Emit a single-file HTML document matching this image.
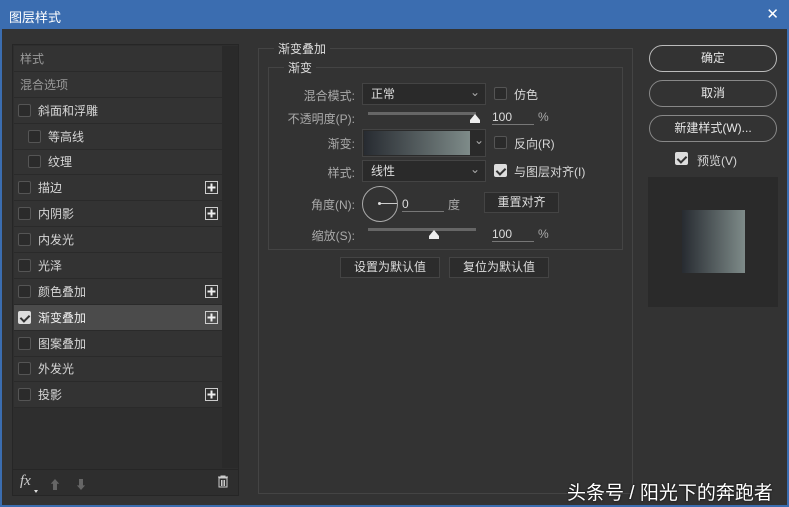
<!DOCTYPE html><html><head><meta charset="utf-8"><style>
*{box-sizing:border-box;margin:0;padding:0}
body{width:789px;height:507px;overflow:hidden;background:#3b6db0;font-family:"Liberation Sans","Noto Sans CJK SC",sans-serif;font-size:12px;color:#d6d6d6;position:relative}
.a{position:absolute}
#win{left:2px;top:29px;width:785px;height:476px;background:#333}
.title{left:9px;top:7px;color:#fff;font-size:13px}
.close{right:10px;top:5px;color:#fff;font-size:15px}
.row{position:absolute;left:14px;width:208px;height:26px;border-bottom:1px solid #2a2a2a;line-height:26px}
.cb{position:absolute;width:13px;height:13px;border:1px solid #555;border-radius:2px;background:#2b2b2b}
.cbx{background:#ddd;border-color:#ddd}
.cbx:after{content:"";position:absolute;left:3px;top:1px;width:4px;height:7px;border:solid #333;border-width:0 2px 2px 0;transform:rotate(45deg)}
.plus{position:absolute;left:191px;top:6px;width:13px;height:13px;border:1px solid #ccc}
.plus:before{content:"";position:absolute;left:2px;top:5px;width:7px;height:1px;background:#eee;box-shadow:0 0 0 .5px #eee}
.plus:after{content:"";position:absolute;left:5px;top:2px;width:1px;height:7px;background:#eee;box-shadow:0 0 0 .5px #eee}
.lbl{position:absolute;text-align:right;width:110px;color:#aaa}
.sel{position:absolute;height:22px;background:#2a2a2a;border:1px solid #444;line-height:20px;padding-left:8px;color:#ddd}
.sel:after{content:"⌄";position:absolute;right:5px;top:-2px;color:#aaa}
.btn{position:absolute;height:21px;background:#2c2c2c;border:1px solid #444;text-align:center;line-height:19px;color:#ddd}
.pill{position:absolute;left:649px;width:128px;height:27px;border:1px solid #888;border-radius:14px;text-align:center;line-height:25px;color:#e6e6e6}
.inp{position:absolute;border-bottom:1px solid #777;color:#ddd;height:16px;line-height:16px}
</style></head><body>
<div class="a title">图层样式</div><div class="a close">✕</div>
<div class="a" id="win" style="left:2px;top:29px"></div>
<div class="a" style="left:12px;top:44px;width:227px;height:452px;border:1px solid #262626;background:#2e2e2e"></div>
<div class="a" style="left:222px;top:46px;width:16px;height:422px;background:#2a2a2a"></div>
<div class="a" style="left:14px;top:46px;width:208px;height:362px;background:#333"></div>
<div class="row" style="top:46px;padding-left:6px;color:#999">样式</div>
<div class="row" style="top:72px;padding-left:6px;color:#999">混合选项</div>
<div class="row" style="top:98px"><span class="cb" style="left:4px;top:6px"></span><span style="position:absolute;left:24px">斜面和浮雕</span></div>
<div class="row" style="top:124px"><span class="cb" style="left:14px;top:6px"></span><span style="position:absolute;left:34px">等高线</span></div>
<div class="row" style="top:149px"><span class="cb" style="left:14px;top:6px"></span><span style="position:absolute;left:34px">纹理</span></div>
<div class="row" style="top:175px"><span class="cb" style="left:4px;top:6px"></span><span style="position:absolute;left:24px">描边</span><span class="plus"></span></div>
<div class="row" style="top:201px"><span class="cb" style="left:4px;top:6px"></span><span style="position:absolute;left:24px">内阴影</span><span class="plus"></span></div>
<div class="row" style="top:227px"><span class="cb" style="left:4px;top:6px"></span><span style="position:absolute;left:24px">内发光</span></div>
<div class="row" style="top:253px"><span class="cb" style="left:4px;top:6px"></span><span style="position:absolute;left:24px">光泽</span></div>
<div class="row" style="top:279px"><span class="cb" style="left:4px;top:6px"></span><span style="position:absolute;left:24px">颜色叠加</span><span class="plus"></span></div>
<div class="row" style="top:305px;background:#4b4b4b"><span class="cb cbx" style="left:4px;top:6px"></span><span style="position:absolute;left:24px;color:#eee">渐变叠加</span><span class="plus"></span></div>
<div class="row" style="top:331px"><span class="cb" style="left:4px;top:6px"></span><span style="position:absolute;left:24px">图案叠加</span></div>
<div class="row" style="top:356px"><span class="cb" style="left:4px;top:6px"></span><span style="position:absolute;left:24px">外发光</span></div>
<div class="row" style="top:382px"><span class="cb" style="left:4px;top:6px"></span><span style="position:absolute;left:24px">投影</span><span class="plus"></span></div>
<div class="a" style="left:13px;top:469px;width:225px;height:1px;background:#262626"></div>
<div class="a" style="left:20px;top:473px;font-style:italic;font-family:'Liberation Serif',serif;font-size:15px;color:#ccc">fx</div>
<div class="a" style="left:34px;top:490px;width:0;height:0;border:2px solid transparent;border-top:3px solid #ddd"></div>
<div class="a" style="left:49px;top:476px;color:#666;font-size:12px">⬆</div>
<div class="a" style="left:75px;top:476px;color:#666;font-size:12px">⬇</div>
<svg class="a" style="left:217px;top:475px" width="12" height="13"><path d="M1 2h10M4 2V1h4v1M2 3h8v9H2zM4.5 5v6M6 5v6M7.5 5v6" stroke="#ccc" fill="none"/></svg>
<div class="a" style="left:258px;top:48px;width:375px;height:446px;border:1px solid #444"></div>
<div class="a" style="left:274px;top:40px;background:#333;padding:0 4px;color:#ddd">渐变叠加</div>
<div class="a" style="left:268px;top:67px;width:355px;height:183px;border:1px solid #444"></div>
<div class="a" style="left:284px;top:59px;background:#333;padding:0 4px;color:#ddd">渐变</div>
<div class="lbl" style="left:245px;top:87px">混合模式:</div>
<div class="sel" style="left:362px;top:83px;width:124px">正常</div>
<span class="cb" style="left:494px;top:87px"></span><span class="a" style="left:514px;top:86px">仿色</span>
<div class="lbl" style="left:245px;top:110px">不透明度(P):</div>
<div class="a" style="left:368px;top:112px;width:108px;height:3px;background:#666"></div>
<div class="a" style="left:470px;top:114px;width:0;height:0;border:5px solid transparent;border-bottom:6px solid #eee;border-top:0"></div>
<div class="a" style="left:470px;top:120px;width:10px;height:3px;background:#eee"></div>
<div class="inp" style="left:492px;top:109px;width:42px">100</div><span class="a" style="left:538px;top:110px;color:#aaa">%</span>
<div class="lbl" style="left:245px;top:135px">渐变:</div>
<div class="a" style="left:362px;top:129px;width:124px;height:28px;border:1px solid #444;background:#2a2a2a"></div>
<div class="a" style="left:364px;top:131px;width:106px;height:24px;background:linear-gradient(90deg,#272b31,#7e8b89)"></div>
<span class="a" style="left:474px;top:133px;color:#aaa">⌄</span>
<span class="cb" style="left:494px;top:136px"></span><span class="a" style="left:514px;top:135px">反向(R)</span>
<div class="lbl" style="left:245px;top:164px">样式:</div>
<div class="sel" style="left:362px;top:160px;width:124px">线性</div>
<span class="cb cbx" style="left:494px;top:164px"></span><span class="a" style="left:514px;top:163px">与图层对齐(I)</span>
<div class="lbl" style="left:245px;top:196px">角度(N):</div>
<div class="a" style="left:362px;top:186px;width:36px;height:36px;border:1px solid #aaa;border-radius:50%"></div>
<div class="a" style="left:379px;top:203px;width:18px;height:1px;background:#ccc"></div>
<div class="a" style="left:378px;top:202px;width:3px;height:3px;background:#ddd;border-radius:50%"></div>
<div class="inp" style="left:402px;top:196px;width:42px">0</div><span class="a" style="left:448px;top:196px;color:#aaa">度</span>
<div class="btn" style="left:484px;top:192px;width:75px">重置对齐</div>
<div class="lbl" style="left:245px;top:227px">缩放(S):</div>
<div class="a" style="left:368px;top:228px;width:108px;height:3px;background:#666"></div>
<div class="a" style="left:429px;top:230px;width:0;height:0;border:5px solid transparent;border-bottom:6px solid #eee;border-top:0"></div>
<div class="a" style="left:429px;top:236px;width:10px;height:3px;background:#eee"></div>
<div class="inp" style="left:492px;top:226px;width:42px">100</div><span class="a" style="left:538px;top:227px;color:#aaa">%</span>
<div class="btn" style="left:340px;top:257px;width:100px">设置为默认值</div>
<div class="btn" style="left:449px;top:257px;width:100px">复位为默认值</div>
<div class="pill" style="top:45px;border-color:#bbb">确定</div>
<div class="pill" style="top:80px">取消</div>
<div class="pill" style="top:115px">新建样式(W)...</div>
<span class="cb cbx" style="left:675px;top:152px"></span><span class="a" style="left:697px;top:152px">预览(V)</span>
<div class="a" style="left:648px;top:177px;width:130px;height:130px;background:#2a2a2a"></div>
<div class="a" style="left:682px;top:210px;width:63px;height:63px;background:linear-gradient(90deg,#272b31,#7e8b89)"></div>
<div class="a" style="left:567px;top:478px;color:#fff;font-size:19px;text-shadow:0 0 2px #000">头条号 / 阳光下的奔跑者</div>
</body></html>
